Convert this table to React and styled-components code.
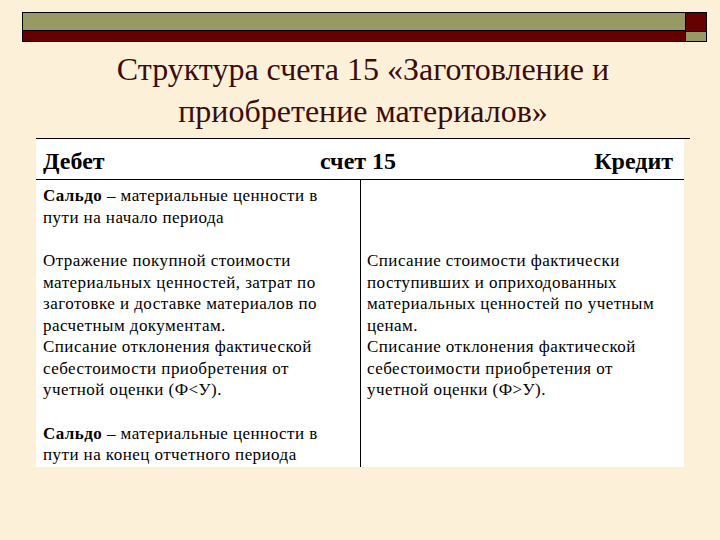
import React from "react";
import styled, { createGlobalStyle } from "styled-components";

const serif = `"Liberation Serif", serif`;

const GlobalStyle = createGlobalStyle`
  html, body {
    margin: 0;
    padding: 0;
    background: #fcf1d8;
    font-family: ${serif};
  }
`;

const rows = [
  {
    debit: [
      <><b>Сальдо</b> – материальные ценности в</>,
      "пути на начало периода",
    ],
    credit: [],
  },
  {
    debit: [
      "Отражение покупной стоимости",
      "материальных ценностей, затрат по",
      "заготовке и доставке материалов по",
      "расчетным документам.",
      "Списание отклонения фактической",
      "себестоимости приобретения от",
      "учетной оценки (Ф<У).",
    ],
    credit: [
      "Списание стоимости фактически",
      "поступивших и оприходованных",
      "материальных ценностей по учетным",
      "ценам.",
      "Списание отклонения фактической",
      "себестоимости приобретения от",
      "учетной оценки (Ф>У).",
    ],
  },
  {
    debit: [
      <><b>Сальдо</b> – материальные ценности в</>,
      "пути на конец отчетного периода",
    ],
    credit: [],
  },
];

const App = () => {
  return (
    <Page>
      <GlobalStyle />
      <TopBar>
        <BarMain>
          <Stripe $color="#999966" $height="17px" />
          <Stripe $color="#660000" />
        </BarMain>
        <BarSide>
          <Stripe $color="#660000" $height="18px" />
          <Stripe $color="#999966" />
        </BarSide>
      </TopBar>

      <Title>
        Структура счета 15 «Заготовление и
        <br />
        приобретение материалов»
      </Title>

      <Table>
        <Sheet>
          <Head>
            <HeadCell $align="start">Дебет</HeadCell>
            <HeadCell $align="center">счет 15</HeadCell>
            <HeadCell $align="end">Кредит</HeadCell>
          </Head>
          <Body>
            {rows.map((row, i) => (
              <React.Fragment key={i}>
                <Cell $first={i === 0} $last={i === rows.length - 1}>
                  {row.debit.map((line, j) => (
                    <Line key={j}>{line}</Line>
                  ))}
                </Cell>
                <Cell $right $first={i === 0} $last={i === rows.length - 1}>
                  {row.credit.map((line, j) => (
                    <Line key={j}>{line}</Line>
                  ))}
                </Cell>
              </React.Fragment>
            ))}
          </Body>
        </Sheet>
      </Table>
    </Page>
  );
};

const Page = styled.div`
  width: 720px;
  height: 540px;
  box-sizing: border-box;
  padding-top: 12px;
  background: #fcf1d8;
  font-family: ${serif};
  overflow: hidden;
`;

const TopBar = styled.div`
  display: flex;
  margin-left: 22px;
  width: 685px;
  height: 30px;
  box-sizing: border-box;
  border: 1px solid #000;
`;

const BarMain = styled.div`
  flex: 1;
  display: flex;
  flex-direction: column;
`;

const BarSide = styled.div`
  width: 20px;
  display: flex;
  flex-direction: column;
  border-left: 1px solid #000;
`;

const Stripe = styled.div`
  background: ${(p) => p.$color};
  flex: ${(p) => (p.$height ? `0 0 ${p.$height}` : "1")};
  & + & {
    border-top: 1px solid #000;
  }
`;

const Title = styled.h1`
  margin: 6px 0 0 36px;
  width: 654px;
  text-align: center;
  font-family: ${serif};
  font-weight: normal;
  font-size: 32px;
  line-height: 42px;
  color: #3a0c0c;
  white-space: nowrap;
`;

const Table = styled.div`
  margin: 6px 0 0 36px;
  width: 654px;
  border-top: 1px solid #000;
`;

const Sheet = styled.div`
  width: 648px;
  background: #fff;
`;

const Head = styled.div`
  display: grid;
  grid-template-columns: 1fr auto 1fr;
  align-items: center;
  padding: 8px 11px 4px 7px;
  border-bottom: 1px solid #000;
  font-weight: bold;
  font-size: 24px;
  line-height: 28px;
  color: #000;
`;

const HeadCell = styled.div`
  justify-self: ${(p) => p.$align};
  white-space: nowrap;
`;

const Body = styled.div`
  display: grid;
  grid-template-columns: 324px 1fr;
`;

const Cell = styled.div`
  padding-top: ${(p) => (p.$first ? "5px" : "0")};
  padding-bottom: ${(p) => (p.$last ? "1px" : "22px")};
  padding-left: ${(p) => (p.$right ? "6px" : "7px")};
  padding-right: 6px;
  border-left: ${(p) => (p.$right ? "1px solid #000" : "none")};
  font-size: 17px;
  letter-spacing: 0.45px;
  line-height: 21.5px;
  color: #000;
`;

const Line = styled.div`
  white-space: nowrap;
`;

export default App;
